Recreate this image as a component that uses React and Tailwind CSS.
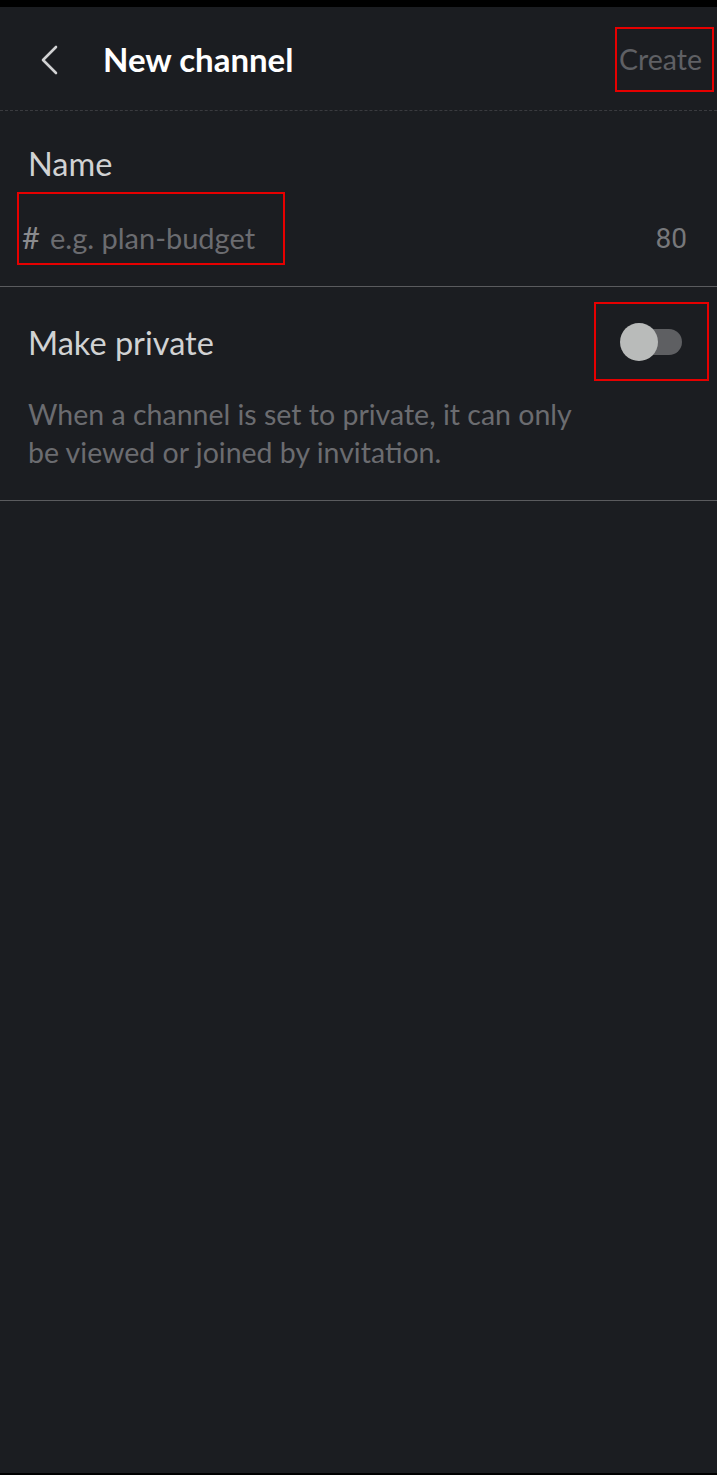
import { useState } from "react";

const lato = { fontFamily: "Lato, 'Open Sans', sans-serif" };

function BackChevron() {
  return (
    <svg width="20" height="30" viewBox="0 0 20 30" fill="none">
      <path d="M17 2 L4 15 L17 28" stroke="#d1d2d3" strokeWidth="2.6" strokeLinecap="round" strokeLinejoin="round" />
    </svg>
  );
}

function Toggle({ on, onChange }) {
  return (
    <button onClick={() => onChange(!on)} className="relative w-[62px] h-[38px] flex items-center">
      <span className="absolute left-[20px] w-[42px] h-[26px] rounded-full bg-[#5e5f62]" />
      <span className="absolute left-0 w-[38px] h-[38px] rounded-full bg-[#b9bbba]" />
    </button>
  );
}

export default function App() {
  const [priv, setPriv] = useState(false);
  return (
    <div className="w-[717px] h-[1475px] bg-black flex flex-col" style={lato}>
      <div className="h-[7px] shrink-0" />
      <div className="flex-1 bg-[#1b1d21] flex flex-col">
        {/* header */}
        <div className="h-[104px] flex items-center border-b border-dashed border-[#3a3b3f] pt-[2px]">
          <div className="pl-[39px] w-[103px] flex items-center">
            <BackChevron />
          </div>
          <h1 className="text-[33px] font-bold text-white">New channel</h1>
          <div className="ml-auto mr-[3px] w-[99px] h-[65px] border-2 border-[#e60000] flex items-center pl-[2px]">
            <span className="text-[28.5px] text-[#5f6064]">Create</span>
          </div>
        </div>

        {/* name */}
        <div className="h-[176px] border-b border-[#5a5b5e] flex flex-col">
          <div className="pl-[28px] pt-[33px] text-[32.5px] text-[#d1d2d3] leading-[40px]">Name</div>
          <div className="mt-[8px] flex items-center pr-[30px]">
            <div className="ml-[17px] w-[268px] h-[73px] border-2 border-[#e60000] flex items-center pl-[3px] pt-[18px]">
              <span className="text-[31px] text-[#8a8b8e] mr-[10px]">#</span>
              <span className="text-[29px] text-[#6b6c70]">e.g. plan-budget</span>
            </div>
            <span className="ml-auto pt-[20px] text-[28px] text-[#77787b]" style={{ fontFamily: "Roboto, sans-serif" }}>80</span>
          </div>
        </div>

        {/* private */}
        <div className="h-[214px] border-b border-[#5a5b5e] flex flex-col">
          <div className="flex items-start">
            <div className="pl-[28px] pt-[36px] text-[32.5px] text-[#d1d2d3] leading-[40px]">Make private</div>
            <div className="ml-auto mr-[8px] mt-[15px] w-[115px] h-[79px] border-2 border-[#e60000] flex items-center pl-[24px]">
              <Toggle on={priv} onChange={setPriv} />
            </div>
          </div>
          <p className="pl-[28px] pt-[14px] w-[600px] text-[28.5px] leading-[38px] text-[#6b6c70]">
            When a channel is set to private, it can only be viewed or joined by invitation.
          </p>
        </div>
      </div>
      <div className="h-[2px] shrink-0" />
    </div>
  );
}
